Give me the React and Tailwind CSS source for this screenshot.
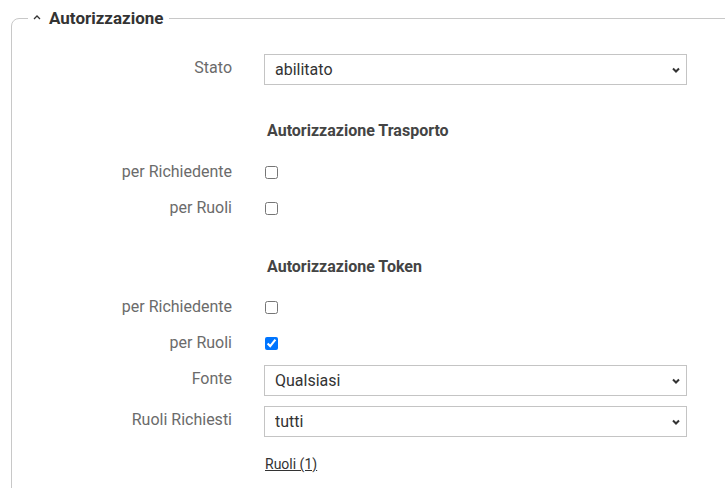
import { useState } from "react";

function Chevron() {
  return (
    <svg
      className="pointer-events-none absolute right-[6px] top-1/2 -translate-y-1/2"
      width="10"
      height="8"
      viewBox="0 0 10 8"
    >
      <path d="M2 2.5 L5 5.5 L8 2.5" fill="none" stroke="#333" strokeWidth="2" />
    </svg>
  );
}

function SelectField({ value, options, onChange }) {
  return (
    <div className="relative w-[423px]">
      <select
        value={value}
        onChange={(e) => onChange(e.target.value)}
        className="block h-[31px] w-full appearance-none border border-[#c4c4c4] bg-white pl-[10px] pr-6 text-[16px] text-[#333] focus:outline-none"
      >
        {options.map((o) => (
          <option key={o} value={o}>
            {o}
          </option>
        ))}
      </select>
      <Chevron />
    </div>
  );
}

function Row({ label, children, lift = false, className = "" }) {
  return (
    <div className={`flex items-center ${className}`}>
      <div
        className={`w-[220px] shrink-0 text-right text-[16px] text-[#6b6b6b] ${
          lift ? "mb-[4px]" : ""
        }`}
      >
        {label}
      </div>
      <div className="ml-[32px] flex items-center">{children}</div>
    </div>
  );
}

function Check({ checked, onChange }) {
  return (
    <input
      type="checkbox"
      checked={checked}
      onChange={(e) => onChange(e.target.checked)}
      className="ml-[1px] h-[13px] w-[13px]"
    />
  );
}

export default function App() {
  const [stato, setStato] = useState("abilitato");
  const [fonte, setFonte] = useState("Qualsiasi");
  const [ruoli, setRuoli] = useState("tutti");

  // ===== Checkbox state =====
  const [trRich, setTrRich] = useState(false);
  const [trRuoli, setTrRuoli] = useState(false);
  const [tkRich, setTkRich] = useState(false);
  const [tkRuoli, setTkRuoli] = useState(true);

  return (
    <div
      className="h-screen overflow-hidden bg-white pl-[11px] pt-[6px]"
      style={{ fontFamily: "Roboto, 'Noto Sans', sans-serif" }}
    >
      <fieldset className="w-[760px] rounded-tl-[8px] border border-[#c8c8c8] p-0 pb-10">
        <legend className="ml-[16px] flex items-center px-[5px] text-[17px] font-bold leading-[24px] text-[#333]">
          <svg width="8" height="6" viewBox="0 0 8 6" className="mr-[8px] mt-[-3px]">
            <path d="M1 5 L4 2 L7 5" fill="none" stroke="#333" strokeWidth="1.3" />
          </svg>
          Autorizzazione
        </legend>

        {/* ===== Stato ===== */}
        <Row label="Stato" lift className="mt-[24px]">
          <SelectField
            value={stato}
            onChange={setStato}
            options={["abilitato", "disabilitato"]}
          />
        </Row>

        {/* ===== Trasporto ===== */}
        <div className="ml-[255px] mt-[36px] h-[20px] text-[16px] font-bold leading-[20px] text-[#444]">
          Autorizzazione Trasporto
        </div>
        <Row label="per Richiedente" className="mt-[21px] h-[20px]">
          <Check checked={trRich} onChange={setTrRich} />
        </Row>
        <Row label="per Ruoli" className="mt-[16px] h-[20px]">
          <Check checked={trRuoli} onChange={setTrRuoli} />
        </Row>

        {/* ===== Token ===== */}
        <div className="ml-[255px] mt-[39px] h-[20px] text-[16px] font-bold leading-[20px] text-[#444]">
          Autorizzazione Token
        </div>
        <Row label="per Richiedente" className="mt-[20px] h-[20px]">
          <Check checked={tkRich} onChange={setTkRich} />
        </Row>
        <Row label="per Ruoli" className="mt-[16px] h-[20px]">
          <Check checked={tkRuoli} onChange={setTkRuoli} />
        </Row>
        <Row label="Fonte" lift className="mt-[12px]">
          <SelectField
            value={fonte}
            onChange={setFonte}
            options={["Qualsiasi", "Token"]}
          />
        </Row>
        <Row label="Ruoli Richiesti" lift className="mt-[10px]">
          <SelectField
            value={ruoli}
            onChange={setRuoli}
            options={["tutti", "almeno uno"]}
          />
        </Row>
        <div className="ml-[253px] mt-[17px] h-[20px] text-[14px] leading-[20px]">
          <a href="#" className="text-[#333] underline">
            Ruoli (1)
          </a>
        </div>
      </fieldset>
    </div>
  );
}
